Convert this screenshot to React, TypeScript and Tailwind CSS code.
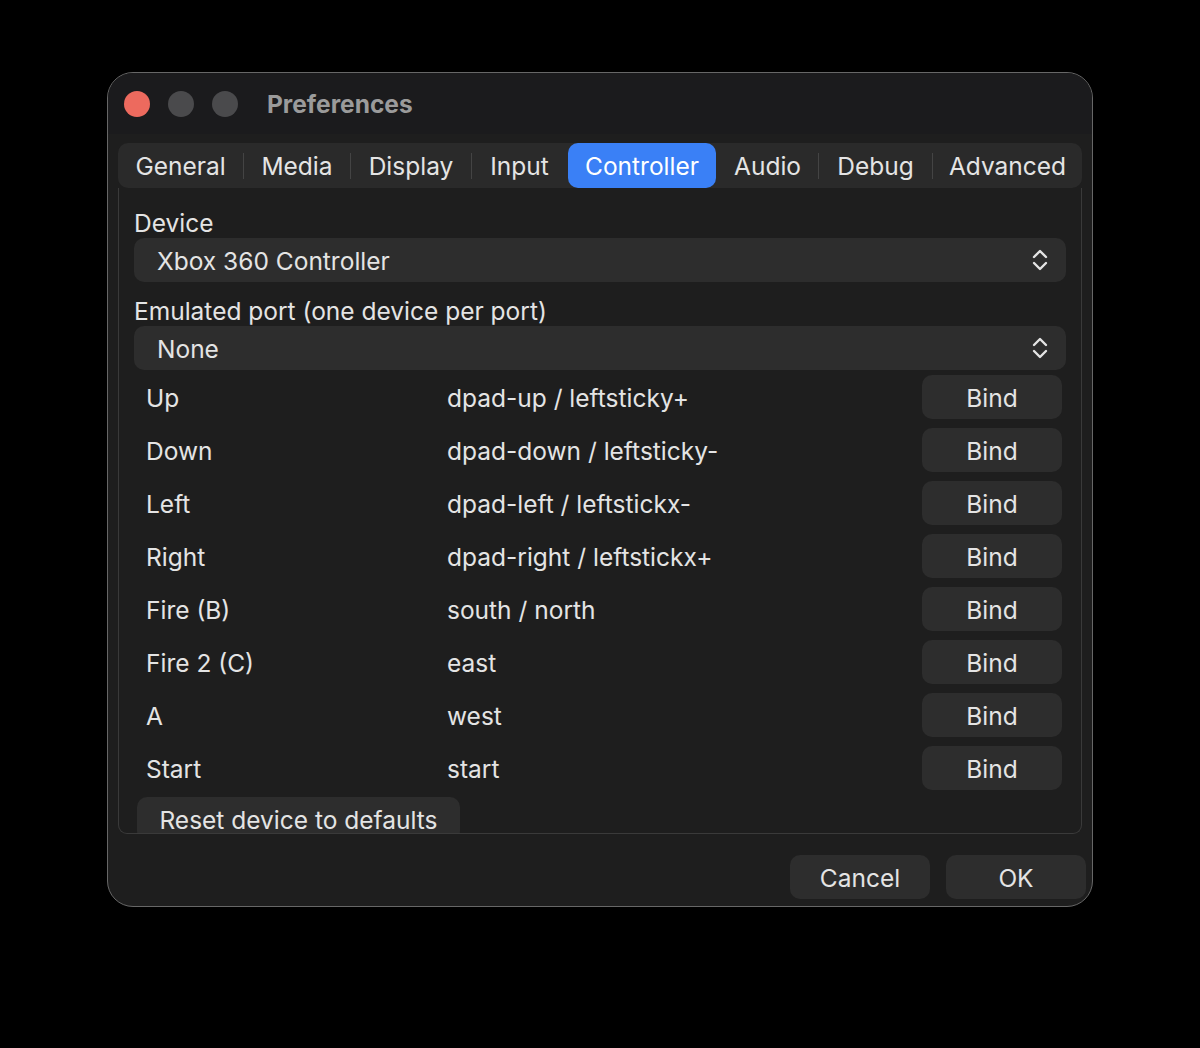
import React from "react";

const tabs = [
  { name: "General", w: "w-[125px]" },
  { name: "Media", w: "w-[106px]" },
  { name: "Display", w: "w-[120px]" },
  { name: "Input", w: "w-[95px]" },
  { name: "Controller", w: "w-[148px]" },
  { name: "Audio", w: "w-[101px]" },
  { name: "Debug", w: "w-[113px]" },
  { name: "Advanced", w: "w-[149px]" },
];

const rows = [
  ["Up", "dpad-up / leftsticky+"],
  ["Down", "dpad-down / leftsticky-"],
  ["Left", "dpad-left / leftstickx-"],
  ["Right", "dpad-right / leftstickx+"],
  ["Fire (B)", "south / north"],
  ["Fire 2 (C)", "east"],
  ["A", "west"],
  ["Start", "start"],
];

function Chevrons() {
  return (
    <svg width="16" height="24" viewBox="0 0 16 24" fill="none">
      <path d="M2 9 L8 3 L14 9" stroke="#e4e4e4" strokeWidth="2.4" strokeLinecap="round" strokeLinejoin="round" />
      <path d="M2 15 L8 21 L14 15" stroke="#e4e4e4" strokeWidth="2.4" strokeLinecap="round" strokeLinejoin="round" />
    </svg>
  );
}

function Select({ value }: { value: string }) {
  return (
    <div className="h-[44px] rounded-[10px] bg-[#2d2d2d] flex items-center justify-between pl-[23px] pr-[18px]">
      <span className="pt-[3px]">{value}</span>
      <Chevrons />
    </div>
  );
}

export default function App() {
  const selected = 4;
  return (
    <div className="w-[1200px] h-[1048px] bg-black pt-[72px] pl-[107px] font-['Inter','Noto_Sans',sans-serif] text-[24.5px] text-[#e4e4e4]">
      <div className="w-[986px] h-[835px] rounded-[26px] border border-[#676767] bg-[#1e1e1e] overflow-hidden flex flex-col">
        {/* Title bar */}
        <div className="h-[61px] shrink-0 bg-[#1b1b1d] flex items-center pl-[16px]">
          <div className="flex items-center gap-[18px]">
            <div className="w-[26px] h-[26px] rounded-full bg-[#ed6a5e]" />
            <div className="w-[26px] h-[26px] rounded-full bg-[#4a4a4c]" />
            <div className="w-[26px] h-[26px] rounded-full bg-[#4a4a4c]" />
          </div>
          <div className="ml-[29px] pt-[2px] font-bold text-[#9b9b9b]">Preferences</div>
        </div>

        {/* Body */}
        <div className="px-[10px] pt-[9px] flex flex-col">
          <div className="w-[964px] h-[691px] flex flex-col">
            {/* Tab bar */}
            <div className="h-[45px] shrink-0 rounded-[10px] bg-[#2a2a2a] flex items-center">
              {tabs.map((t, i) => {
                const isSel = i === selected;
                const showSep =
                  i < tabs.length - 1 && i !== selected && i + 1 !== selected;
                return (
                  <React.Fragment key={t.name}>
                    <div
                      className={
                        isSel
                          ? `${t.w} h-[45px] pt-[2px] rounded-[10px] bg-[#3a80f6] text-white flex items-center justify-center`
                          : `${t.w} h-[45px] pt-[2px] flex items-center justify-center`
                      }
                    >
                      {t.name}
                    </div>
                    {i < tabs.length - 1 &&
                      (showSep ? (
                        <div className="w-px h-[26px] bg-[#444444]" />
                      ) : (
                        <div className="w-px h-[26px]" />
                      ))}
                  </React.Fragment>
                );
              })}
            </div>

            {/* Panel */}
            <div className="flex-1 border-x border-b border-[#3a3a3a] rounded-b-[9px] overflow-hidden px-[15px] pt-[19px] flex flex-col">
              <div className="h-[30px] pt-[2px] flex items-center">Device</div>
              <div className="mt-[1px]">
                <Select value="Xbox 360 Controller" />
              </div>
              <div className="mt-[13px] h-[30px] pt-[2px] flex items-center">
                Emulated port (one device per port)
              </div>
              <div className="mt-[1px]">
                <Select value="None" />
              </div>
              <div className="mt-[5px] flex flex-col gap-[9px]">
                {rows.map(([label, val]) => (
                  <div key={label} className="h-[44px] flex items-center pl-[12px] pr-[4px]">
                    <div className="w-[301px] pt-[3px]">{label}</div>
                    <div className="flex-1 pt-[3px]">{val}</div>
                    <div className="w-[140px] h-[44px] pt-[3px] rounded-[10px] bg-[#2d2d2d] flex items-center justify-center">
                      Bind
                    </div>
                  </div>
                ))}
              </div>
              <div className="mt-[7px] ml-[3px] w-[323px] h-[44px] pt-[3px] shrink-0 rounded-[10px] bg-[#2d2d2d] flex items-center justify-center">
                Reset device to defaults
              </div>
            </div>
          </div>
        </div>

        {/* Footer buttons */}
        <div className="mt-[21px] flex justify-end gap-[16px] pr-[6px]">
          <div className="w-[140px] h-[44px] pt-[3px] rounded-[10px] bg-[#2d2d2d] flex items-center justify-center">
            Cancel
          </div>
          <div className="w-[140px] h-[44px] pt-[3px] rounded-[10px] bg-[#2d2d2d] flex items-center justify-center">
            OK
          </div>
        </div>
      </div>
    </div>
  );
}
